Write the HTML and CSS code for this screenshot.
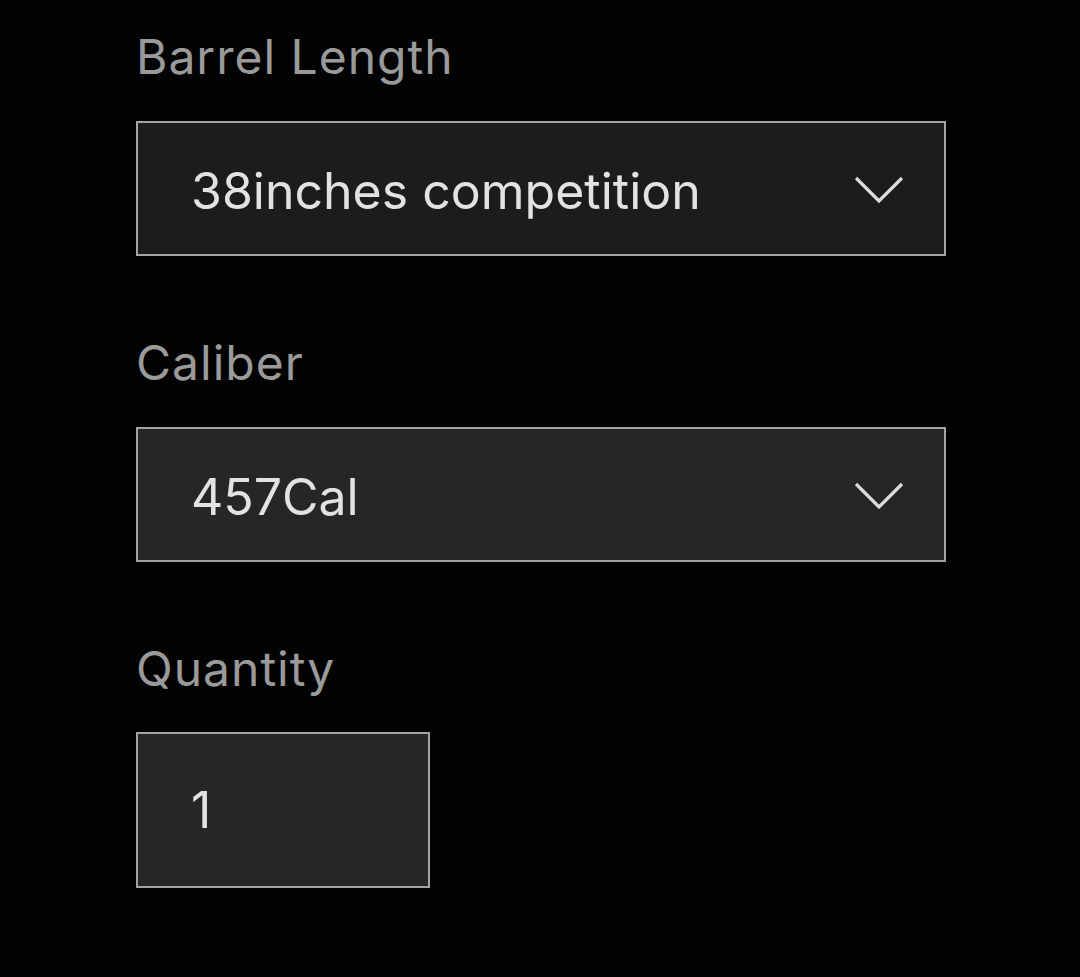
FILE: index.html
```html
<!DOCTYPE html>
<html lang="en">
<head>
<meta charset="utf-8">
<title>Product options</title>
<link rel="stylesheet" href="styles.css">
</head>
<body>
<main class="form">
  <div class="field">
    <label class="label">Barrel Length</label>
    <div class="select select--dark">
      <span class="value">38inches competition</span>
      <svg class="chevron" width="50" height="28" viewBox="0 0 50 28"><polyline points="2,3 25,26 48,3" fill="none" stroke="#dcdcdc" stroke-width="3.2"/></svg>
    </div>
  </div>
  <div class="field">
    <label class="label">Caliber</label>
    <div class="select">
      <span class="value">457Cal</span>
      <svg class="chevron" width="50" height="28" viewBox="0 0 50 28"><polyline points="2,3 25,26 48,3" fill="none" stroke="#dcdcdc" stroke-width="3.2"/></svg>
    </div>
  </div>
  <div class="field">
    <label class="label">Quantity</label>
    <div class="qty"><span class="value">1</span></div>
  </div>
</main>
</body>
</html>
```

FILE: styles.css
```css
html, body {
  margin: 0;
  padding: 0;
  background: #030303;
}
body {
  font-family: Inter, Lato, sans-serif;
  width: 1080px;
  height: 977px;
  overflow: hidden;
}
.form {
  display: flex;
  flex-direction: column;
  gap: 79px;
  padding: 29px 0 0 136px;
}
.field {
  display: flex;
  flex-direction: column;
  gap: 36px;
}
.field:last-child {
  gap: 35px;
}
.label {
  font-size: 48px;
  line-height: 56px;
  color: #9a9a9a;
  letter-spacing: 1px;
}
.select, .qty {
  box-sizing: border-box;
  border: 2px solid #a3a3a3;
  background: #262626;
  display: flex;
  align-items: center;
}
.select {
  width: 810px;
  height: 135px;
  justify-content: space-between;
  padding: 4px 40px 0 53px;
}
.select--dark {
  background: #1c1c1c;
}
.qty {
  width: 294px;
  height: 156px;
  padding-left: 53px;
}
.value {
  font-size: 50px;
  color: #e2e2e2;
}
.chevron {
  display: block;
  margin-bottom: 3px;
}
```
